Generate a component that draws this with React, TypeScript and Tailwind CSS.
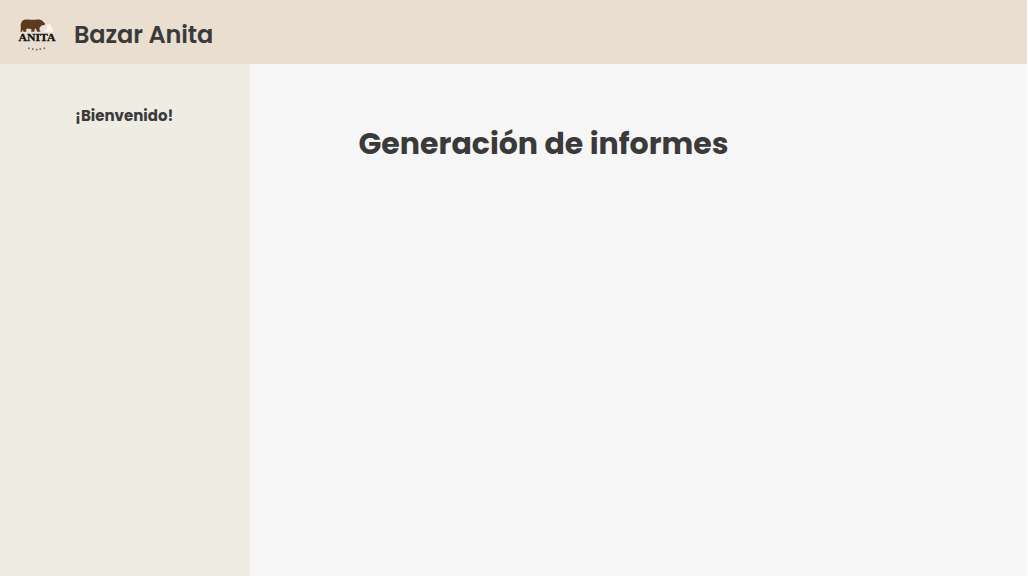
function Logo() {
  return (
    <svg width="38" height="36" viewBox="0 0 38 36" role="img" aria-label="Anita" className="overflow-visible">
      <path
        fill="#5b3a20"
        d="M3 5.500C3.600 3 5.600 1.600 8.200 1.500c3-.3 6 .5 9 .3 2.500-.3 3.700-.4 5.300.3l1-.4.500 1c1.400.8 2.200 2 3.200 3l-.6 1.300-3.200.6-2 2.400.2 2.200 1 1.600h-3.400l-1.300-3-1-.2-.6 3.200h-3l.1-2.800-4.500-.5-1 1.700.7 1.600H5.400l-.4-1.900-.8.600.2 1.300H2.500l.3-3.600C2.800 8.600 2.400 7.200 3 5.500Z"
      />
      <path
        fill="#f8f5f0"
        d="M25.500 13.500c.6-1.200 2-1.500 3.300-2l.5-2.300-.6-1.600.8-1.300 1.300.2.700-1.300.9.600-.2 1.600c1.500 1 2.400 2.400 2.500 4l.8.900-.7 1.500h-9.300Z"
      />
      <text
        x="0.500"
        y="23"
        textLength="37"
        lengthAdjust="spacingAndGlyphs"
        stroke="#111111"
        strokeWidth="0.300"
        className="fill-[#111111] font-['Liberation_Serif',serif] text-[11px] font-bold"
      >
        ANITA
      </text>
      <g fill="#75675a">
        <rect x="10" y="29.500" width="1.600" height="1.600" />
        <rect x="14" y="30.300" width="1.600" height="1.600" />
        <rect x="18" y="30.800" width="1.600" height="1.600" />
        <rect x="21.500" y="30.300" width="1.600" height="1.600" />
        <rect x="25.500" y="29.500" width="1.600" height="1.600" />
      </g>
    </svg>
  );
}

export default function App() {
  return (
    <div className="h-screen overflow-hidden bg-white pr-px font-[Poppins,Inter,sans-serif] text-[#3a3a3a] antialiased">
      <div className="flex h-full flex-col bg-[#f6f6f6]">
        <header className="flex h-16 shrink-0 items-center gap-[18px] bg-[#e9decf] pt-1.5 pl-[18px]">
          <div className="pt-0.5">
            <Logo />
          </div>
          <span className="text-2xl font-semibold tracking-[-0.1px] whitespace-nowrap">Bazar Anita</span>
        </header>
        <div className="flex min-h-0 flex-1">
          <aside className="w-[249.5px] shrink-0 bg-[#efece4] pt-10 pr-px text-center">
            <p className="text-[15px] leading-6 font-bold">¡Bienvenido!</p>
          </aside>
          <main className="flex-1 pt-14 pl-[109px]">
            <h1 className="text-[30px] leading-[48px] font-bold whitespace-nowrap">
              Generación de informes
            </h1>
          </main>
        </div>
      </div>
    </div>
  );
}
